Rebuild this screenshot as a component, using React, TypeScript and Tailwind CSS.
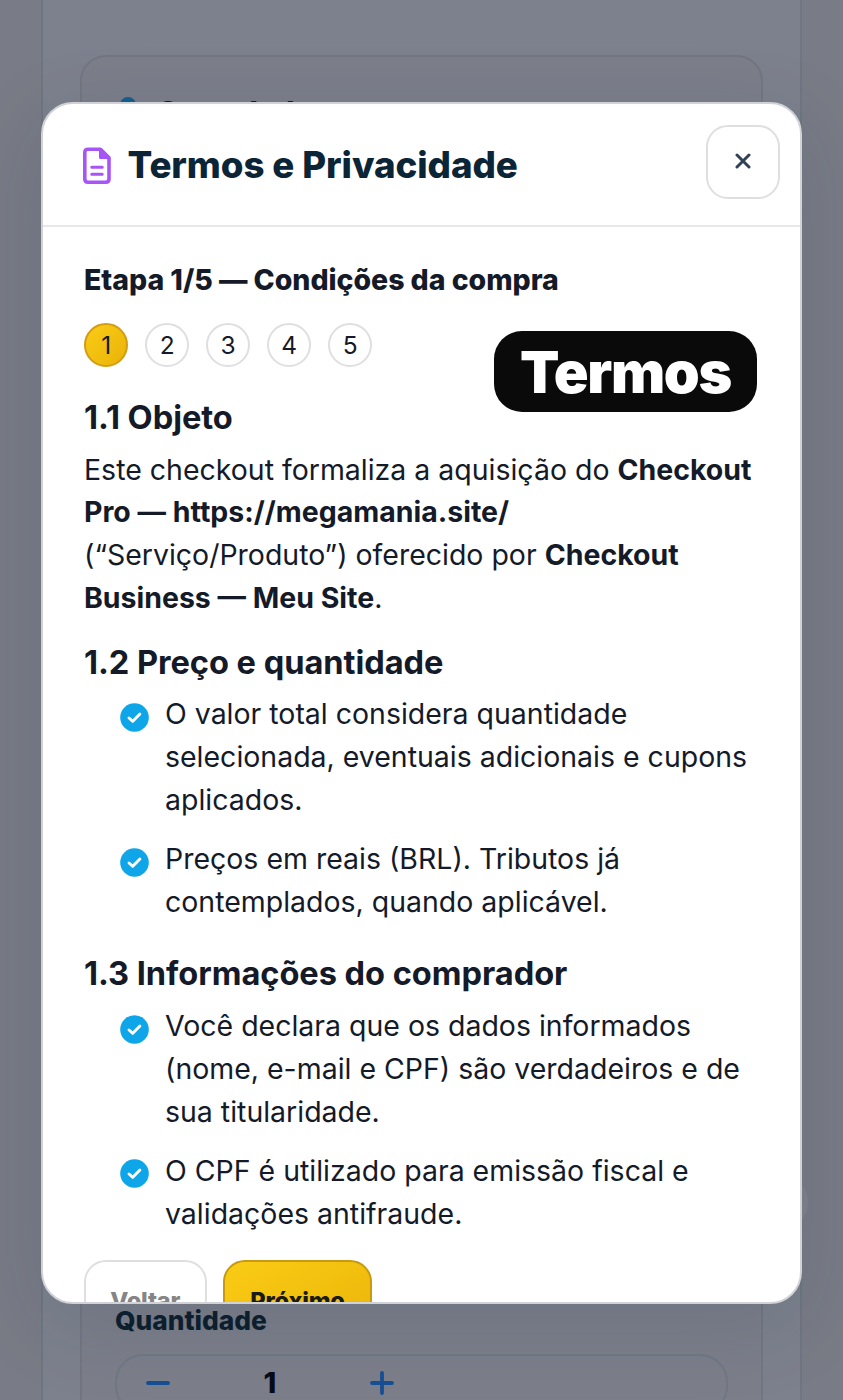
import React from "react";

const STEPS = [1, 2, 3, 4, 5];

function DocIcon() {
  return (
    <svg className="mt-px block h-[38px] w-[30px] shrink-0" viewBox="0 0 30 38" fill="none">
      <path
        d="M6 2.2H18.5L27 10.7V32Q27 35.2 23.8 35.2H6Q2.8 35.2 2.8 32V5.4Q2.8 2.2 6 2.2Z"
        stroke="#a855f7"
        strokeWidth="3.6"
        strokeLinejoin="round"
      />
      <path d="M17 2V10.4Q17 12 18.6 12H28L19 2Z" fill="#a855f7" />
      <path d="M9.8 20.3H20.2M9.8 27.2H20.2" stroke="#a855f7" strokeWidth="3.1" strokeLinecap="round" />
    </svg>
  );
}

function CheckDot() {
  return (
    <svg className="mt-[9.5px] block size-[29px] shrink-0" viewBox="0 0 29 29" fill="none">
      <circle cx="14.5" cy="14.5" r="14.3" fill="#0ea5e9" />
      <path d="M9 15L12.8 18.3L19.9 11" stroke="#fff" strokeWidth="2.9" strokeLinecap="round" strokeLinejoin="round" />
    </svg>
  );
}

function Item({ lines }: { lines: string[] }) {
  return (
    <li className="flex gap-[16px]">
      <CheckDot />
      <span className="whitespace-nowrap">
        {lines.map((line) => (
          <span key={line} className="block">
            {line}
          </span>
        ))}
      </span>
    </li>
  );
}

function Heading({ children, className }: { children: React.ReactNode; className: string }) {
  return (
    <h3 className={`mb-[11.8px] text-[32.6px] leading-[40px] font-bold tracking-[-0.04px] whitespace-nowrap ${className}`}>
      {children}
    </h3>
  );
}

function Checkout() {
  return (
    <div className="h-full bg-[#797b86] px-[41px]">
      <main className="h-full border-x-2 border-[#6e7682] bg-[#7d818d] px-[37px] pt-[54.5px]">
        <section className="flex h-[1400px] flex-col rounded-t-[26px] border-2 border-[#737681] bg-[#7c7e8a] px-[33px]">
          <div className="flex h-[1247px] items-start pt-[40px]">
            <span className="mr-[22px] ml-[5px] size-[16px] rounded-full bg-[#145f8e]" />
            <span className="-mt-[1px] text-[30px] leading-[32px] font-extrabold text-[#101b2b]">Seus dados</span>
          </div>
          <div className="text-[26.3px] leading-[34px] font-extrabold text-[#0c1d2c]">Quantidade</div>
          <div className="mt-[16.5px] flex h-[60px] shrink-0 rounded-[28px] border-2 border-[#717884] text-[#174f95]">
            <div className="flex w-[82px] items-center justify-center pb-[2px]">
              <svg className="size-[24px]" viewBox="0 0 24 24" stroke="currentColor" strokeWidth="3.8" strokeLinecap="round">
                <path d="M2 12H22" />
              </svg>
            </div>
            <div className="flex w-[142px] items-center justify-center pb-[2px] text-[29px] font-extrabold text-[#090c17]">1</div>
            <div className="flex w-[82px] items-center justify-center pb-[2px]">
              <svg className="size-[24px]" viewBox="0 0 24 24" stroke="currentColor" strokeWidth="3.8" strokeLinecap="round">
                <path d="M2 12H22M12 2V22" />
              </svg>
            </div>
          </div>
        </section>
      </main>
    </div>
  );
}

export default function App() {
  return (
    <div className="relative h-[1400px] w-[843px] overflow-hidden font-['Inter',sans-serif] text-[#141a28]">
      <Checkout />
      <div className="absolute top-[1174px] left-[752px] size-[56px] rounded-full bg-[#81828c]" />

      <div className="absolute top-[102px] left-[41px] flex h-[1202px] w-[761px] flex-col overflow-hidden rounded-[32px] border-2 border-[#d0d2d7] bg-white shadow-[0_20px_80px_rgba(25,60,75,0.15)]">
        <header className="flex h-[123px] shrink-0 items-start border-b-2 border-[#e8e8e9] pr-[20px] pl-[39px]">
          <div className="flex h-[122px] flex-1 items-center gap-[15.5px]">
            <DocIcon />
            <h2 className="text-[36.7px] leading-[48px] font-extrabold tracking-[-0.07px] whitespace-nowrap text-[#0b2537]">
              Termos e Privacidade
            </h2>
          </div>
          <button className="mt-[20.5px] flex size-[74px] items-center justify-center rounded-[22px] border-2 border-[#dfdfdf] pb-[2px]">
            <svg className="size-[16px]" viewBox="0 0 16 16" stroke="#334155" strokeWidth="3" strokeLinecap="round">
              <path d="M2 2L14 14M14 2L2 14" />
            </svg>
          </button>
        </header>

        <div className="flex flex-col px-[41px] text-[28.48px] leading-[42.8px]">
          <div className="mt-[32px] font-extrabold tracking-[-0.03px] whitespace-nowrap">
            Etapa 1/5 — Condições da compra
          </div>
          <div className="mt-[21.2px] flex gap-[16.6px]">
            {STEPS.map((step) => (
              <span
                key={step}
                className={
                  step === 1
                    ? "flex size-[44.4px] items-center justify-center rounded-full border-2 border-[#d39c12] bg-linear-to-br from-[#facc15] to-[#eab308] text-[24.5px]"
                    : "flex size-[44.4px] items-center justify-center rounded-full border-2 border-[#dfdfdf] text-[24.5px]"
                }
              >
                {step}
              </span>
            ))}
          </div>

          <Heading className="mt-[29.4px]">1.1 Objeto</Heading>
          <p className="whitespace-nowrap">
            Este checkout formaliza a aquisição do <b>Checkout</b>
            <br />
            <b>Pro — https://megamania.site/</b>
            <br />
            (“Serviço/Produto”) oferecido por <b>Checkout</b>
            <br />
            <b>Business — Meu Site</b>.
          </p>

          <Heading className="mt-[21.8px]">1.2 Preço e quantidade</Heading>
          <ul className="flex flex-col gap-[16.3px] pl-[36px]">
            <Item lines={["O valor total considera quantidade", "selecionada, eventuais adicionais e cupons", "aplicados."]} />
            <Item lines={["Preços em reais (BRL). Tributos já", "contemplados, quando aplicável."]} />
          </ul>

          <Heading className="mt-[29.8px]">1.3 Informações do comprador</Heading>
          <ul className="flex flex-col gap-[16.3px] pl-[36px]">
            <Item lines={["Você declara que os dados informados", "(nome, e-mail e CPF) são verdadeiros e de", "sua titularidade."]} />
            <Item lines={["O CPF é utilizado para emissão fiscal e", "validações antifraude."]} />
          </ul>

          <div className="mt-[24.2px] flex gap-[16.5px] text-[23.6px] font-extrabold tracking-[-0.2px]">
            <button className="flex h-[83px] w-[122.5px] items-center justify-center rounded-[22px] border-2 border-[#dfdfdf] text-[#858585]">
              Voltar
            </button>
            <button className="flex h-[83px] w-[149px] items-center justify-center rounded-[22px] border-2 border-[#c79a12] bg-linear-to-br from-[#facc15] to-[#eab308] text-[#1a1a12]">
              Próximo
            </button>
          </div>
        </div>
      </div>

      <div className="absolute top-[331px] left-[494px] flex h-[81px] w-[263px] items-center justify-center rounded-[28px] bg-[#0a0a0a] pt-[2px] text-[57.5px] font-black tracking-[-1.3px] text-white">
        Termos
      </div>
    </div>
  );
}
